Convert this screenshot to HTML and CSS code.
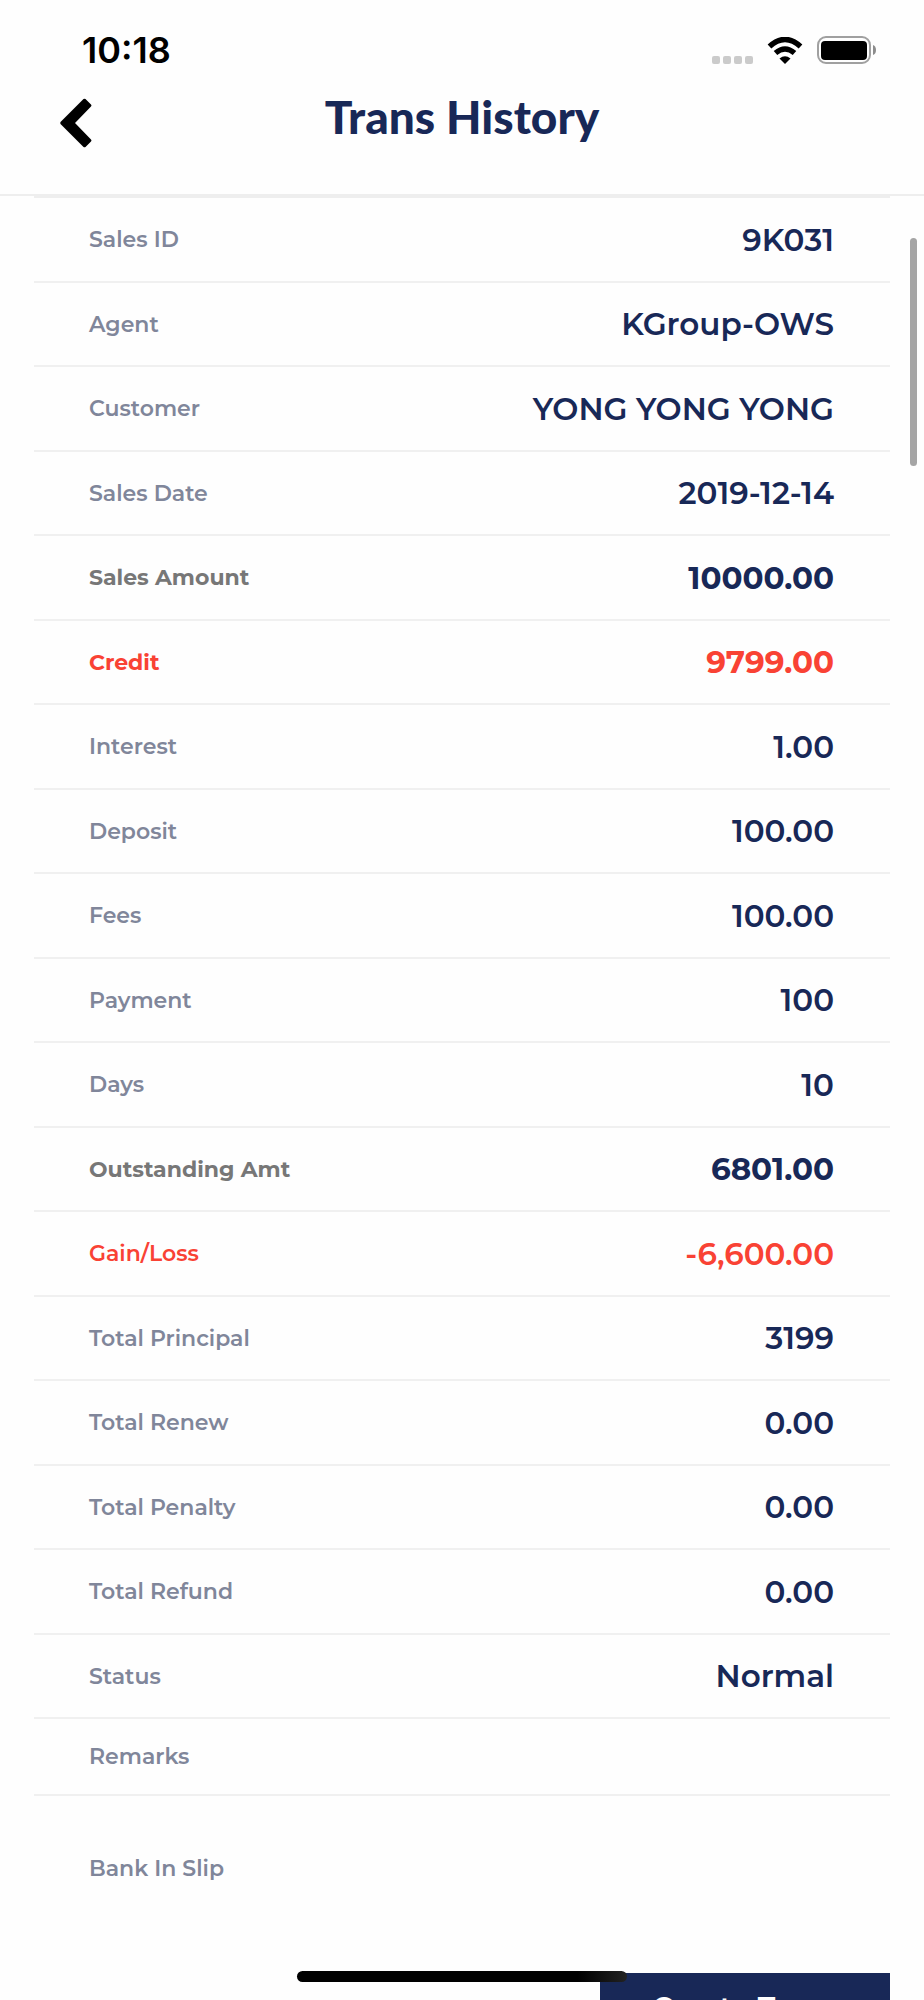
FILE: index.html
```html
<!DOCTYPE html>
<html lang="en">
<head>
  <meta charset="UTF-8" />
  <title>Trans History</title>
  <meta name="viewport" content="width=device-width, initial-scale=1" />
  <link rel="stylesheet" href="styles.css">
</head>
<body>

<div class="screen">
  <div class="status-bar">
    <span class="clock">10:18</span>
    <div class="status-icons">
      <svg class="signal" width="42" height="8" viewBox="0 0 42 8" fill="#cbcbcb">
        <rect x="0" y="0" width="8" height="8" rx="2"/>
        <rect x="11" y="0" width="8" height="8" rx="2"/>
        <rect x="22" y="0" width="8" height="8" rx="2"/>
        <rect x="33" y="0" width="8" height="8" rx="2"/>
      </svg>
      <svg class="wifi" width="36" height="27" viewBox="0 0 36 27">
        <path d="M2.500 9.500Q18-4.500 33.500 9.500" fill="none" stroke="#000" stroke-width="5.500"/>
        <path d="M8.500 16Q18 8 27.500 16" fill="none" stroke="#000" stroke-width="5.500"/>
        <path d="M12.500 21.500Q18 17 23.500 21.500L18 27Z"/>
      </svg>
      <svg class="battery" width="60" height="28" viewBox="0 0 60 28">
        <rect x="1" y="1" width="52" height="26" rx="8" fill="none" stroke="#a0a0a0" stroke-width="2"/>
        <rect x="4" y="5" width="46" height="19" rx="4"/>
        <path d="M56 9Q59 10 59 14T56 19Z" fill="#8c8c8c"/>
      </svg>
    </div>
  </div>

  <header class="header">
    <button class="back" aria-label="Back">
      <svg width="32" height="50" viewBox="0 0 32 50">
        <path d="M25.500 1 31 6.500Q32 7.500 31 8.500L15 25 31 41.500Q32 42.500 31 43.500L25.500 49Q24.500 49.500 23.500 49L.5 26Q0 25 .5 24L23.500 1Q24.500 .5 25.500 1Z"/>
      </svg>
    </button>
    <h1 class="title">Trans History</h1>
  </header>

  <main class="content">
    <table class="details">
      <tbody>
        <tr><th scope="row">Sales ID</th><td>9K031</td></tr>
        <tr><th scope="row">Agent</th><td>KGroup-OWS</td></tr>
        <tr><th scope="row">Customer</th><td>YONG YONG YONG</td></tr>
        <tr><th scope="row">Sales Date</th><td>2019-12-14</td></tr>
        <tr class="total"><th scope="row">Sales Amount</th><td>10000.00</td></tr>
        <tr class="total alert"><th scope="row">Credit</th><td>9799.00</td></tr>
        <tr><th scope="row">Interest</th><td>1.00</td></tr>
        <tr><th scope="row">Deposit</th><td>100.00</td></tr>
        <tr><th scope="row">Fees</th><td>100.00</td></tr>
        <tr><th scope="row">Payment</th><td>100</td></tr>
        <tr><th scope="row">Days</th><td>10</td></tr>
        <tr class="total"><th scope="row">Outstanding Amt</th><td>6801.00</td></tr>
        <tr class="alert"><th scope="row">Gain/Loss</th><td>-6,600.00</td></tr>
        <tr><th scope="row">Total Principal</th><td>3199</td></tr>
        <tr><th scope="row">Total Renew</th><td>0.00</td></tr>
        <tr><th scope="row">Total Penalty</th><td>0.00</td></tr>
        <tr><th scope="row">Total Refund</th><td>0.00</td></tr>
        <tr><th scope="row">Status</th><td>Normal</td></tr>
      </tbody>
      <tbody>
        <tr class="remarks"><th scope="row">Remarks</th><td></td></tr>
        <tr class="slip"><th scope="row">Bank In Slip</th><td></td></tr>
      </tbody>
    </table>
    <button class="create">Create Trans</button>
  </main>

  <div class="scrollbar"></div>
  <div class="home-indicator"></div>
</div>

</body>
</html>
```
FILE: styles.css
```css
* {
  box-sizing: border-box;
}
body {
  margin: 0;
  background: #fefefe;
  color: #182857;
  font-family: Montserrat, Inter, sans-serif;
}
.screen {
  position: relative;
  height: 100vh;
  overflow: hidden;
}
.status-bar {
  display: flex;
  justify-content: space-between;
  align-items: center;
  height: 100px;
  padding: 0 47px 0 82px;
}
.clock {
  color: #000;
  font-family: Inter, sans-serif;
  font-size: 36px;
  font-weight: 600;
}
.status-icons {
  display: flex;
  align-items: flex-end;
}
.wifi {
  margin: 0 14px 0 13px;
}
.header {
  display: grid;
  grid-template-columns: 120px 1fr 120px;
  height: 96px;
  border-bottom: 2px solid #eee;
}
.back {
  display: flex;
  align-self: start;
  padding: 0 0 0 60px;
  background: none;
  border: none;
  cursor: pointer;
}
.back svg {
  margin-top: -2px;
}
.title {
  margin: 0;
  font-family: Lato, sans-serif;
  font-size: 46px;
  font-weight: 900;
  line-height: 34px;
  text-align: center;
}
.content {
  padding: 0 34px;
}
.details {
  width: 100%;
  border-collapse: collapse;
  border-top: 2px solid #eee;
}
.details tr {
  height: 84px;
  border-bottom: 2px solid #f0f0f0;
}
.details tr:nth-child(odd) {
  height: 85px;
}
.details th {
  padding: 0 0 0 55px;
  color: #80869a;
  font-size: 22px;
  font-weight: 600;
  text-align: left;
}
.details td {
  padding: 0 56px 0 0;
  font-size: 31px;
  font-weight: 600;
  text-align: right;
}
.details .total th {
  color: #777;
  font-weight: 700;
}
.details .total td {
  font-weight: 700;
}
.details .alert th,
.details .alert td {
  color: #f94234;
}
.details tr.remarks {
  height: 77px;
}
.details tr.slip {
  height: 146px;
  border-bottom: none;
}
.create {
  display: block;
  width: 290px;
  height: 68px;
  margin: 32px 0 0 auto;
  border: none;
  background: #182857;
  color: #fff;
  font-family: inherit;
  font-size: 29px;
  font-weight: 600;
  cursor: pointer;
}
.scrollbar {
  position: absolute;
  top: 238px;
  right: 7px;
  width: 7px;
  height: 228px;
  border-radius: 4px;
  background: #a5a5a5;
}
.home-indicator {
  position: absolute;
  bottom: 18px;
  left: 50%;
  width: 330px;
  height: 11px;
  margin-left: -165px;
  border-radius: 6px;
  background: linear-gradient(to right, #000 85%, #222);
}
```
